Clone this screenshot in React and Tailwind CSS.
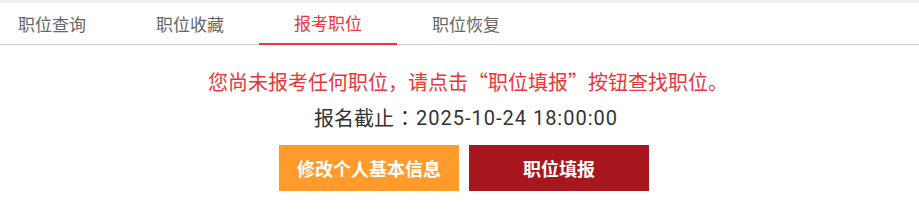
const tabs = ["职位查询", "职位收藏", "报考职位", "职位恢复"];

export default function App() {
  const active = 2;
  return (
    <div
      className="w-[919px] h-[223px] bg-white"
      style={{ fontFamily: '"Microsoft YaHei", "Noto Sans CJK SC", sans-serif' }}
    >
      <div className="h-[3px] bg-[#eeeeee]" />
      {/* tabs */}
      <div className="flex h-[42px] border-b border-[#cccccc]">
        {tabs.map((t, i) => (
          <div
            key={t}
            className={`flex items-center h-[42px] text-[17px] ${
              i === 0 ? "pl-[18px] pr-[35px]" : "px-[35px]"
            } ${
              i === active
                ? "text-[#e8363a] border-b-2 border-[#ed3538] -mb-px"
                : "text-[#666666]"
            }`}
          >
            {t}
          </div>
        ))}
      </div>

      <div className="flex flex-col items-center pl-[9px] pt-[19px]">
        <p className="ml-[8px] text-[20px] leading-[36px] text-[#e8363a]">
          您尚未报考任何职位，请点击“职位填报”按钮查找职位。
        </p>
        <p className="ml-[4px] flex text-[20px] leading-[36px] text-[#333333]">
          <span>报名截止</span>
          <span className="inline-block w-[22px] text-center font-[Noto_Sans_CJK_TC]">：</span>
          <span className="font-[Roboto] tracking-[1px]">2025-10-24 18:00:00</span>
        </p>
        <div className="flex gap-[10px] mt-[9px]">
          <button className="w-[180px] h-[46px] bg-[#ff9b2b] text-white text-[18px] font-bold">
            修改个人基本信息
          </button>
          <button className="w-[180px] h-[46px] bg-[#a8161e] text-white text-[18px] font-bold">
            职位填报
          </button>
        </div>
      </div>
    </div>
  );
}
